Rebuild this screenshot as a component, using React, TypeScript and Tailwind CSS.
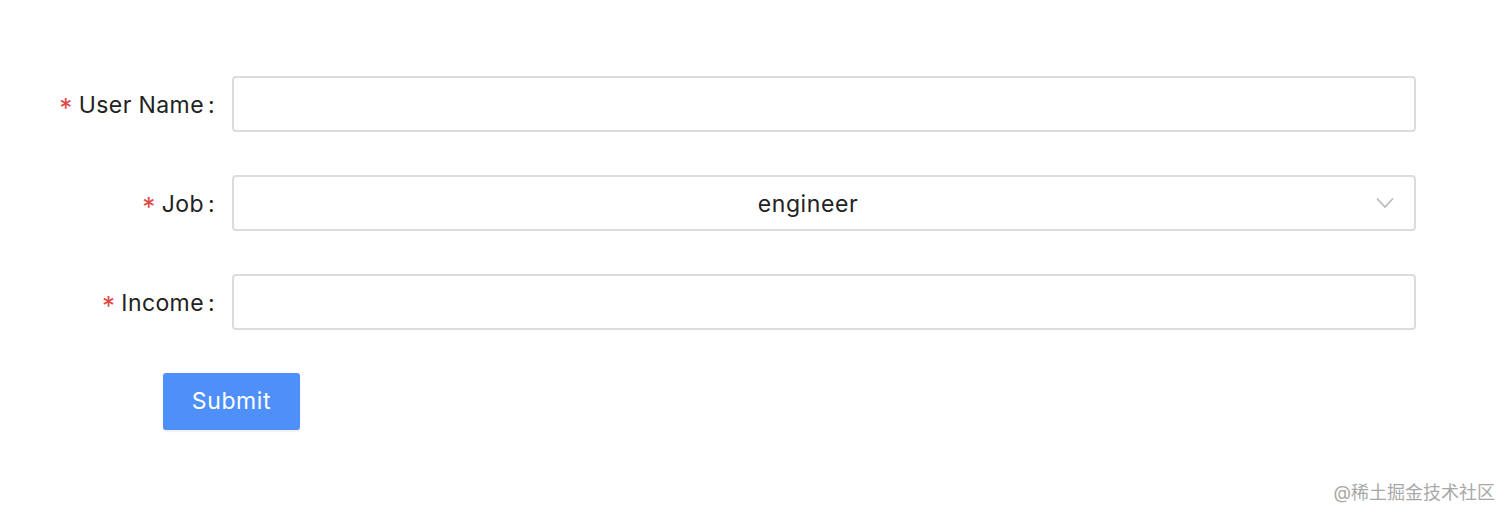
import React from "react";

const font = { fontFamily: '"Inter", "Noto Sans", "Noto Sans CJK SC", sans-serif' };

function Label({ text }: { text: string }) {
  return (
    <div className="w-[216px] shrink-0 flex items-center justify-end text-[23px] tracking-[0.4px] text-[#222] pr-[1px] translate-y-[1px]">
      <span className="text-[#e04848] mr-[6px] text-[26px] leading-none translate-y-[3px]">*</span>
      <span>{text}</span>
      <span className="ml-[4px]">:</span>
    </div>
  );
}

export default function App() {
  return (
    <div className="relative w-[1512px] h-[518px] bg-white" style={font}>
      <div className="flex flex-col gap-[43px] pt-[76px] pr-[96px]">
        <div className="flex items-center h-[56px]">
          <Label text="User Name" />
          <div className="ml-[16px] flex-1 h-[56px] border-2 border-[#dcdcdc] rounded-[4px]" />
        </div>
        <div className="flex items-center h-[56px]">
          <Label text="Job" />
          <div className="ml-[16px] flex-1 h-[56px] border-2 border-[#dcdcdc] rounded-[4px] relative flex items-center justify-center pr-[32px] text-[23px] tracking-[0.6px] text-[#222]">
            <span className="translate-y-[1px]">engineer</span>
            <svg
              className="absolute right-[20px] top-1/2 -translate-y-1/2"
              width="18"
              height="12"
              viewBox="0 0 18 12"
              fill="none"
            >
              <path d="M1 1.5 L9 10 L17 1.5" stroke="#b8b8b8" strokeWidth="1.6" />
            </svg>
          </div>
        </div>
        <div className="flex items-center h-[56px]">
          <Label text="Income" />
          <div className="ml-[16px] flex-1 h-[56px] border-2 border-[#dcdcdc] rounded-[4px]" />
        </div>
        <div className="flex">
          <button className="ml-[163px] w-[137px] h-[57px] bg-[#4f8ffa] text-white text-[23px] tracking-[0.6px] rounded-[3px] shadow-[0_2px_2px_rgba(0,0,0,0.06)]">
            Submit
          </button>
        </div>
      </div>
      <div className="absolute right-[17px] top-[479px] text-[18px] text-[#a8a8a8]">
        @稀土掘金技术社区
      </div>
    </div>
  );
}
